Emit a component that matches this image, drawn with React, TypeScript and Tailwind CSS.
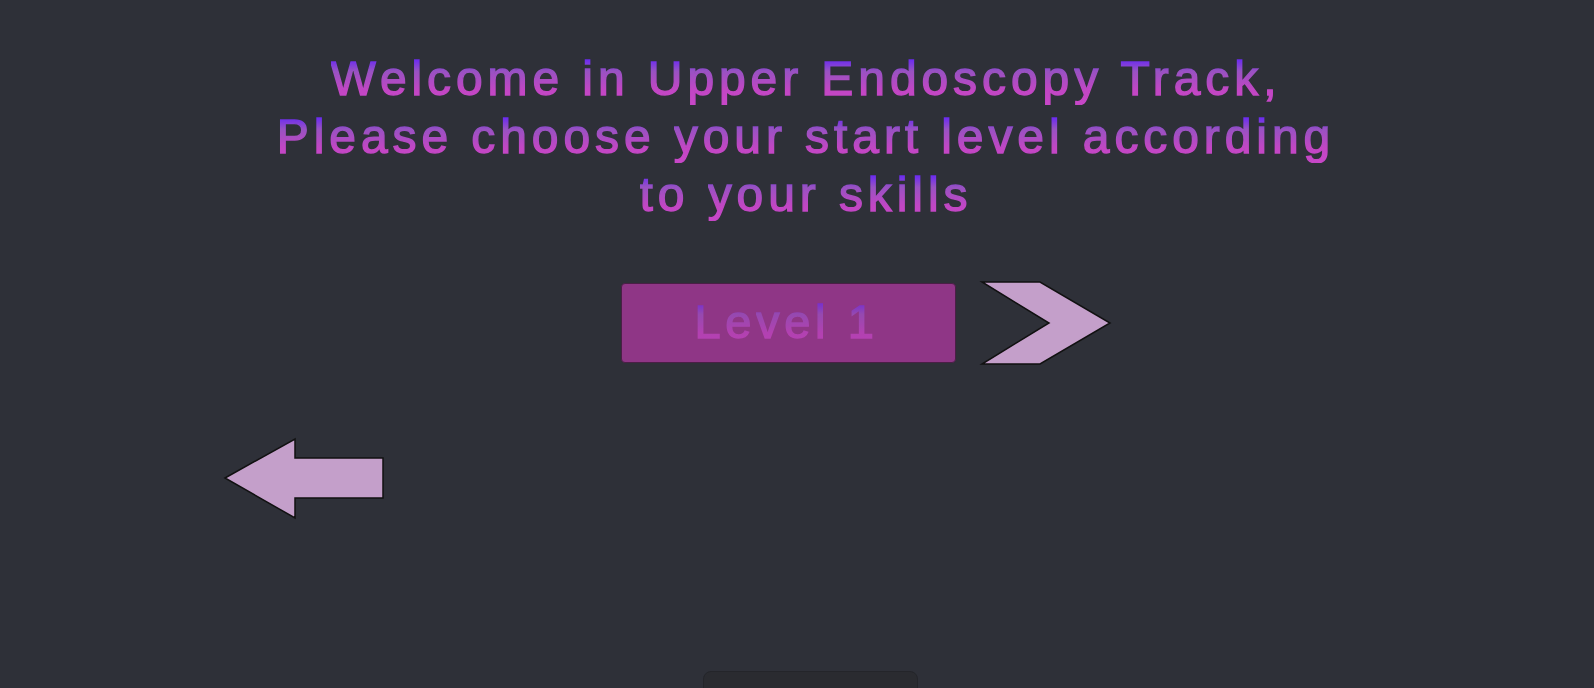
import React from 'react'

// each glyph gets its own gradient, like the vertex colours in the original
function GradText({ text }: { text: string }) {
  return (
    <>
      {[...text].map((c, i) => (
        <span
          key={i}
          className="bg-[linear-gradient(to_bottom,#6c2cf0_15%,#9852c2_36%,#c246c4_72%,#c847c8_100%)] bg-clip-text text-transparent [-webkit-text-stroke:1.4px_transparent]"
        >
          {c}
        </span>
      ))}
    </>
  )
}

export default function App() {
  return (
    <div className="w-full h-[688px] bg-[#2e3038] overflow-hidden flex flex-col font-['Liberation_Sans',Arial,sans-serif]">
      {/* titre */}
      <div className="mt-[50px] w-full pl-[18px] text-center text-[48px] leading-[58px] tracking-[4.9px]">
        <div>
          <GradText text="Welcome in Upper Endoscopy Track," />
        </div>
        <div>
          <GradText text="Please choose your start level according" />
        </div>
        <div>
          <GradText text="to your skills" />
        </div>
      </div>

      {/* bouton niveau + suivant */}
      <div className="mt-[59px] w-full pl-[621px] flex items-start gap-[23px]">
        <button className="w-[335px] h-[80px] rounded-[4px] bg-[#8f3686] border border-[#4a1f46] flex items-center justify-center pr-[4px] pb-[2px] text-[47px] tracking-[4.6px]">
          <span className="opacity-70">
            <GradText text="Level 1" />
          </span>
        </button>
        <svg width="134" height="86" viewBox="0 0 134 86" className="-mt-[2px]">
          <polygon
            points="3,1 61,1 131,42 61,83 3,83 70,42"
            fill="#c49fca"
            stroke="#111"
            strokeWidth="1.5"
            strokeLinejoin="miter"
          />
        </svg>
      </div>

      {/* retour */}
      <div className="mt-[70px] w-full pl-[223px]">
        <svg width="164" height="84" viewBox="0 0 164 84">
          <polygon
            points="2,41 72,2 72,21 160,21 160,61 72,61 72,81"
            fill="#c49fca"
            stroke="#111"
            strokeWidth="1.5"
          />
        </svg>
      </div>

      {/* panneau du bas */}
      <div className="mt-[150px] w-full pl-[703px]">
        <div className="w-[215px] h-[40px] rounded-[8px] bg-[#2a2b30] border border-[#24252a]" />
      </div>
    </div>
  )
}
